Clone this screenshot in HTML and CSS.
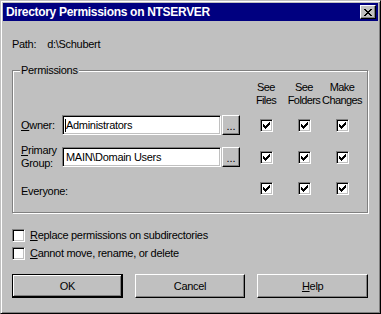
FILE: index.html
```html
<!DOCTYPE html>
<html>
<head>
  <meta charset="UTF-8">
  <link rel="stylesheet" href="styles.css">
</head>
<body>
  <div class="window">
    <div class="title-bar">
      <span class="title-text">Directory Permissions on NTSERVER</span>
      <button class="close-btn" aria-label="Close">
        <svg width="8" height="7" viewBox="0 0 8 7" shape-rendering="crispEdges">
          <path d="M0 0h2v1h-2zM6 0h2v1h-2zM1 1h2v1h-2zM5 1h2v1h-2zM2 2h4v1h-4zM3 3h2v1h-2zM2 4h4v1h-4zM1 5h2v1h-2zM5 5h2v1h-2zM0 6h2v1h-2zM6 6h2v1h-2z" fill="#000"/>
        </svg>
      </button>
    </div>

    <div class="dialog">
      <div class="path-line"><span class="path-key">Path:</span>d:\Schubert</div>

      <div class="group">
        <span class="group-label">Permissions</span>

        <div class="perm-head">
          <div class="checks">
            <div class="cell">See<br>Files</div>
            <div class="cell">See<br>Folders</div>
            <div class="cell">Make<br>Changes</div>
          </div>
        </div>

        <div class="perm-row first">
          <span class="perm-label"><u>O</u>wner:</span>
          <div class="field"><span class="caret"></span>Administrators</div>
          <button class="browse">...</button>
          <div class="checks">
            <div class="cell"><span class="check"><svg width="7" height="7" viewBox="0 0 7 7" shape-rendering="crispEdges"><path d="M0 2h1v1h1v1h1v-1h1v-1h1v-1h1v-1h1v3h-1v1h-1v1h-1v1h-1v1h-1v-1h-1v-1h-1z"/></svg></span></div>
            <div class="cell"><span class="check"><svg width="7" height="7" viewBox="0 0 7 7" shape-rendering="crispEdges"><path d="M0 2h1v1h1v1h1v-1h1v-1h1v-1h1v-1h1v3h-1v1h-1v1h-1v1h-1v1h-1v-1h-1v-1h-1z"/></svg></span></div>
            <div class="cell"><span class="check"><svg width="7" height="7" viewBox="0 0 7 7" shape-rendering="crispEdges"><path d="M0 2h1v1h1v1h1v-1h1v-1h1v-1h1v-1h1v3h-1v1h-1v1h-1v1h-1v1h-1v-1h-1v-1h-1z"/></svg></span></div>
          </div>
        </div>

        <div class="perm-row">
          <span class="perm-label"><u>P</u>rimary<br>Group:</span>
          <div class="field">MAIN\Domain Users</div>
          <button class="browse">...</button>
          <div class="checks">
            <div class="cell"><span class="check"><svg width="7" height="7" viewBox="0 0 7 7" shape-rendering="crispEdges"><path d="M0 2h1v1h1v1h1v-1h1v-1h1v-1h1v-1h1v3h-1v1h-1v1h-1v1h-1v1h-1v-1h-1v-1h-1z"/></svg></span></div>
            <div class="cell"><span class="check"><svg width="7" height="7" viewBox="0 0 7 7" shape-rendering="crispEdges"><path d="M0 2h1v1h1v1h1v-1h1v-1h1v-1h1v-1h1v3h-1v1h-1v1h-1v1h-1v1h-1v-1h-1v-1h-1z"/></svg></span></div>
            <div class="cell"><span class="check"><svg width="7" height="7" viewBox="0 0 7 7" shape-rendering="crispEdges"><path d="M0 2h1v1h1v1h1v-1h1v-1h1v-1h1v-1h1v3h-1v1h-1v1h-1v1h-1v1h-1v-1h-1v-1h-1z"/></svg></span></div>
          </div>
        </div>

        <div class="perm-row last">
          <span class="perm-label everyone">Everyone:</span>
          <div class="checks">
            <div class="cell"><span class="check"><svg width="7" height="7" viewBox="0 0 7 7" shape-rendering="crispEdges"><path d="M0 2h1v1h1v1h1v-1h1v-1h1v-1h1v-1h1v3h-1v1h-1v1h-1v1h-1v1h-1v-1h-1v-1h-1z"/></svg></span></div>
            <div class="cell"><span class="check"><svg width="7" height="7" viewBox="0 0 7 7" shape-rendering="crispEdges"><path d="M0 2h1v1h1v1h1v-1h1v-1h1v-1h1v-1h1v3h-1v1h-1v1h-1v1h-1v1h-1v-1h-1v-1h-1z"/></svg></span></div>
            <div class="cell"><span class="check"><svg width="7" height="7" viewBox="0 0 7 7" shape-rendering="crispEdges"><path d="M0 2h1v1h1v1h1v-1h1v-1h1v-1h1v-1h1v3h-1v1h-1v1h-1v1h-1v1h-1v-1h-1v-1h-1z"/></svg></span></div>
          </div>
        </div>
      </div>

      <div class="options">
        <div class="option"><span class="check"></span><span><u>R</u>eplace permissions on subdirectories</span></div>
        <div class="option"><span class="check"></span><span><u>C</u>annot move, rename, or delete</span></div>
      </div>

      <div class="buttons">
        <button class="btn default">OK</button>
        <button class="btn">Cancel</button>
        <button class="btn"><u>H</u>elp</button>
      </div>
    </div>
  </div>
</body>
</html>
```

FILE: styles.css
```css
body {
  margin: 0;
  background: #c0c0c0;
  font-family: "Liberation Sans", Arial, sans-serif;
  font-size: 11px;
  line-height: 13px;
  letter-spacing: -0.3px;
  color: #000;
}

button {
  font: inherit;
  letter-spacing: inherit;
  color: inherit;
  padding: 0;
  margin: 0;
}

u {
  text-decoration: underline;
  text-underline-offset: 1px;
}

/* window frame */
.window {
  width: 381px;
  height: 314px;
  box-sizing: border-box;
  padding: 2px;
  border: 1px solid;
  border-color: #c0c0c0 #000 #000 #c0c0c0;
  box-shadow: inset 1px 1px #fff, inset -1px -1px #808080;
  background: #c0c0c0;
}

.title-bar {
  height: 18px;
  background: #000080;
  color: #fff;
  display: flex;
  align-items: center;
  justify-content: space-between;
  padding: 0 2px 0 3px;
}

.title-text {
  font-weight: bold;
  font-size: 12px;
  letter-spacing: -0.3px;
}

.close-btn {
  width: 16px;
  height: 14px;
  box-sizing: border-box;
  border: 1px solid;
  border-color: #fff #000 #000 #fff;
  box-shadow: inset -1px -1px #808080;
  background: #c0c0c0;
  display: flex;
  align-items: center;
  justify-content: center;
}

/* dialog body */
.dialog {
  padding: 17px 10px 0 9px;
}

.path-key {
  margin-right: 11px;
}

.group {
  position: relative;
  margin-top: 19px;
  border: 1px solid #808080;
  box-shadow: inset 1px 1px #fff, 1px 1px #fff;
  padding: 10px 6px 14px 8px;
}

.group-label {
  position: absolute;
  top: -7px;
  left: 7px;
  padding: 0 1px;
  background: #c0c0c0;
}

.perm-head {
  display: flex;
  height: 26px;
  letter-spacing: -0.6px;
}

.checks {
  display: flex;
  margin-left: auto;
}

.cell {
  width: 38px;
  display: flex;
  flex-direction: column;
  align-items: center;
  text-align: center;
  white-space: nowrap;
}

.perm-row {
  display: flex;
  align-items: center;
  height: 20px;
  margin-top: 12px;
}

.perm-row.first {
  margin-top: 8px;
}

.perm-row.last {
  margin-top: 11px;
}

.perm-label {
  width: 41px;
  flex-shrink: 0;
}

.perm-label.everyone {
  align-self: flex-end;
}

.field {
  position: relative;
  width: 159px;
  height: 20px;
  box-sizing: border-box;
  border: 1px solid;
  border-color: #808080 #fff #fff #808080;
  box-shadow: inset 1px 1px #000, inset -1px -1px #c0c0c0;
  background: #fff;
  padding: 3px 2px 0 3px;
  white-space: nowrap;
}

.caret {
  position: absolute;
  left: 2px;
  top: 3px;
  width: 1px;
  height: 13px;
  background: #000;
}

.browse {
  width: 18px;
  height: 20px;
  box-sizing: border-box;
  margin-left: 1px;
  border: 1px solid;
  border-color: #fff #000 #000 #fff;
  box-shadow: inset -1px -1px #808080;
  background: #c0c0c0;
  line-height: 13px;
  padding-top: 2px;
  letter-spacing: 0;
}

.check {
  width: 13px;
  height: 13px;
  box-sizing: border-box;
  border: 1px solid;
  border-color: #808080 #fff #fff #808080;
  box-shadow: inset 1px 1px #000, inset -1px -1px #c0c0c0;
  background: #fff;
  display: flex;
  align-items: center;
  justify-content: center;
  flex-shrink: 0;
}

/* bottom options and buttons */
.options {
  margin-top: 13px;
}

.option {
  display: flex;
  align-items: center;
  gap: 5px;
  height: 18px;
}

.buttons {
  display: flex;
  gap: 12px;
  margin-top: 12px;
}

.btn {
  width: 111px;
  height: 24px;
  box-sizing: border-box;
  border: 1px solid;
  border-color: #fff #000 #000 #fff;
  box-shadow: inset -1px -1px #808080;
  background: #c0c0c0;
}

.btn.default {
  border-color: #000;
  box-shadow: inset -1px -1px #000, inset 1px 1px #fff, inset -2px -2px #808080;
}
```
